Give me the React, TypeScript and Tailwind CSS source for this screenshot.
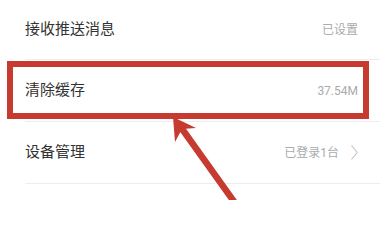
export default function App() {
  return (
    <div
      className="relative w-[385px] h-[200px] overflow-hidden bg-white"
      style={{ fontFamily: '"Roboto", "Noto Sans CJK SC", sans-serif' }}
    >
      {/* Settings list */}
      <div className="flex flex-col">
        <div className="flex items-center justify-between h-[59px] pl-[25px] pr-[27px]">
          <span className="text-[15px] text-[#333333]">接收推送消息</span>
          <span className="text-[12px] text-[#ababab]">已设置</span>
        </div>
        <div className="ml-[25px] mr-[5px] h-px bg-[#ededed]" />

        <div className="relative flex items-center justify-between h-[61px] pl-[25px] pr-[27px]">
          <span className="text-[15px] text-[#333333]">清除缓存</span>
          <span className="text-[12px] text-[#ababab]">37.54M</span>
          {/* highlight box */}
          <div className="absolute left-[7px] right-[16px] top-px bottom-[2px] border-[6px] border-[#c63a30]" />
        </div>
        <div className="ml-[25px] mr-[5px] h-px bg-[#ededed]" />

        <div className="flex items-center justify-between h-[61px] pl-[25px] pr-[27px]">
          <span className="text-[15px] text-[#333333]">设备管理</span>
          <span className="flex items-center gap-[12px] text-[12px] text-[#ababab]">
            已登录1台
            <svg width="7" height="15" viewBox="0 0 7 15" fill="none">
              <polyline points="0.5,0.5 6.2,7.5 0.5,14.5" stroke="#c4c4c4" strokeWidth="1.1" />
            </svg>
          </span>
        </div>
        <div className="ml-[25px] mr-[5px] h-px bg-[#ededed]" />
      </div>

      {/* Arrow annotation */}
      <svg className="absolute inset-0" width="385" height="200" viewBox="0 0 385 200">
        <line x1="180" y1="126" x2="240" y2="210" stroke="#c63a30" strokeWidth="6.5" />
        <polygon points="173,117 196,128 182,129 175,142" fill="#c63a30" />
      </svg>
    </div>
  );
}
